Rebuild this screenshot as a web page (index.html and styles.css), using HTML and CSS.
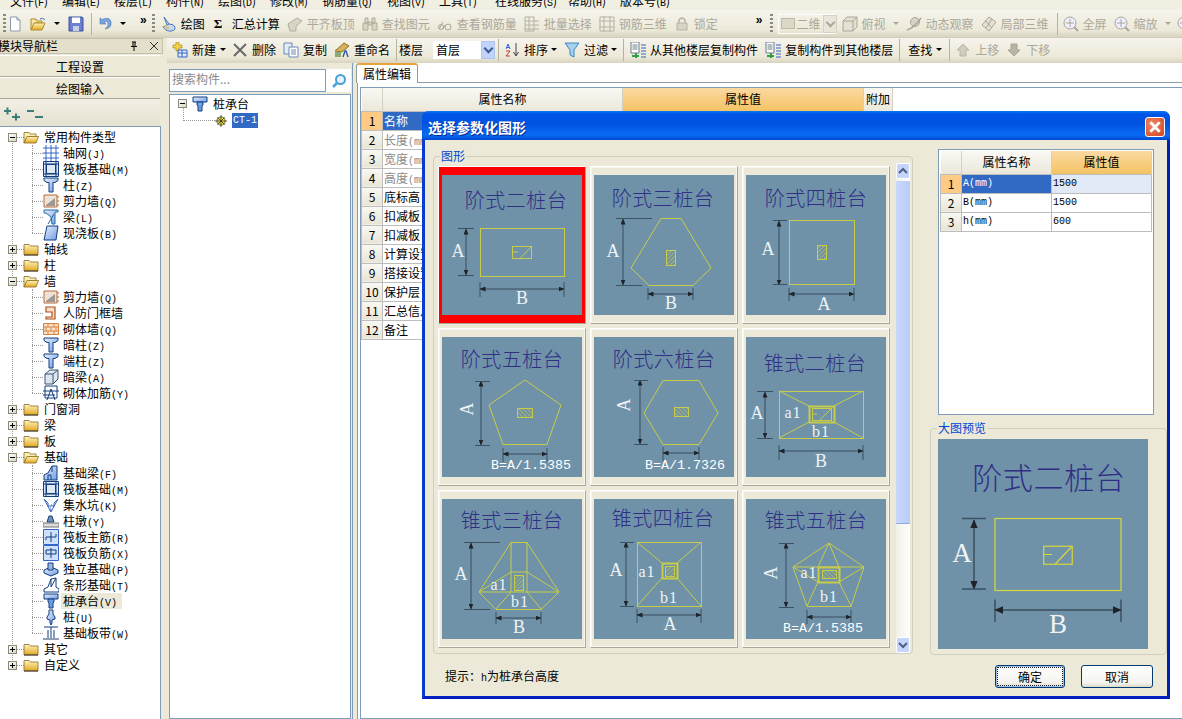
FILE: index.html
```html
<!DOCTYPE html>
<html lang="zh-CN">
<head>
<meta charset="utf-8">
<title>选择参数化图形</title>
<link rel="stylesheet" href="styles.css">
</head>
<body>
<svg class="defs" width="0" height="0" aria-hidden="true">
  <defs>
    <linearGradient id="gf" x1="0" y1="0" x2="0" y2="1"><stop offset="0" stop-color="#fff3b8"/><stop offset="1" stop-color="#e0a820"/></linearGradient>
    <linearGradient id="gb" x1="0" y1="0" x2="1" y2="1"><stop offset="0" stop-color="#e8f0ff"/><stop offset="1" stop-color="#6d9be0"/></linearGradient>
    <marker id="ah" viewBox="0 0 6 5" refX="5.500" refY="2.500" markerWidth="6" markerHeight="5" markerUnits="userSpaceOnUse" orient="auto-start-reverse"><path d="M0 0 6 2.500 0 5z" fill="#1d2328"/></marker>
    <pattern id="ht" width="3" height="3" patternUnits="userSpaceOnUse" patternTransform="rotate(45)"><path d="M0 0V3" stroke="#c8cc48" stroke-width="1.200"/></pattern>
    <pattern id="ht2" width="3" height="3" patternUnits="userSpaceOnUse" patternTransform="rotate(-45)"><path d="M0 0V3" stroke="#c8cc48" stroke-width="1.200"/></pattern>
    <symbol id="fc" viewBox="0 0 16 16"><path d="M1 3.500h5l1.500 1.500H15V14H1z" fill="url(#gf)" stroke="#8a6a1c" stroke-width=".8"/><path d="M1 14H15" stroke="#3a3a3a"/></symbol>
    <symbol id="fo" viewBox="0 0 16 16"><path d="M1 3.500h5l1 1.500h6v3H4L1 14z" fill="#fbeeb6" stroke="#8a6a1c" stroke-width=".8"/><path d="M4 7.500h11.500L13 14H1z" fill="url(#gf)" stroke="#8a6a1c" stroke-width=".8"/></symbol>
    <symbol id="i-grid" viewBox="0 0 16 16"><path d="M3 0V16M8 0V16M13 0V16M0 3H16M0 8H16M0 13H16" stroke="#3465c8" fill="none"/></symbol>
    <symbol id="i-raft" viewBox="0 0 16 16"><path d="M.5.500h15v15H.5z" fill="#dfe9f8" stroke="#123e80"/><path d="M3.500 3.500h9v9h-9zM3 0V16M13 0V16M0 3H16M0 13H16" stroke="#123e80" fill="none"/></symbol>
    <symbol id="i-col" viewBox="0 0 16 16"><path d="M1 1h14v2.500l-3 2H10V15H6V5.500H4l-3-2z" fill="url(#gb)" stroke="#123e80"/></symbol>
    <symbol id="i-wall" viewBox="0 0 16 16"><path d="M1 2h13v12H1z" fill="#efe2d8" stroke="#b96a3a"/><path d="M3 12 12 5v8H3z" fill="#999"/><path d="M15 3v2M15 7v2M15 11v2" stroke="#d65b12"/></symbol>
    <symbol id="i-beam" viewBox="0 0 16 16"><path d="M1 1h14v2H12v12H9L8 8 3 4H1z" fill="url(#gb)" stroke="#1e6ea8"/><path d="M5 15 11 5" stroke="#1e6ea8"/></symbol>
    <symbol id="i-slab" viewBox="0 0 16 16"><path d="M4 1h11l-2 14H1z" fill="url(#gb)" stroke="#123e80"/></symbol>
    <symbol id="i-door" viewBox="0 0 16 16"><path d="M3 2h9v12H3v-2h6V7H3z" fill="#f6dcc8" stroke="#b0501c" stroke-width="1.200"/></symbol>
    <symbol id="i-brick" viewBox="0 0 16 16"><path d="M.5 2.500h15v11H.5z" fill="#fbe2c8" stroke="#d9813c"/><path d="M0 6H16M0 10H16M5 2.500V6M11 2.500V6M3 6v4M8 6v4M13 6v4M5 10v4M11 10v4" stroke="#d9813c"/></symbol>
    <symbol id="i-dbeam" viewBox="0 0 16 16"><path d="M2 5 7 1h8v9l-5 5H2z" fill="#dce6f2" stroke="#40546c"/><path d="M2 5h8v10M10 5l5-4" stroke="#40546c" fill="none"/></symbol>
    <symbol id="i-rebar" viewBox="0 0 16 16"><path d="M2 1h12v12H2z" fill="#fff" stroke="#123e80"/><path d="M0 6H16M0 10H12M8 4 4 15M8 4l4 11" stroke="#123e80" fill="none"/></symbol>
    <symbol id="i-fbeam" viewBox="0 0 16 16"><path d="M1 15v-5l4-2 4-7h5v14z" fill="url(#gb)" stroke="#123e80"/><path d="M5 15V10h3v5M9 1v6" stroke="#123e80" fill="none"/></symbol>
    <symbol id="i-pit" viewBox="0 0 16 16"><path d="M1 2 5 6v3h6V6l4-4M1 2l7 13 7-13" stroke="#3465c8" fill="#fff"/><path d="M4 9h1M7 11h1M10 9h1M8 8h1M6 13h3" stroke="#3465c8"/></symbol>
    <symbol id="i-pier" viewBox="0 0 16 16"><path d="M6 3h3l2 6H4z" fill="#6d8fc0" stroke="#24406c"/><path d="M0 10h16v4H0z" fill="#ddd" stroke="#777"/></symbol>
    <symbol id="i-rm" viewBox="0 0 16 16"><path d="M.5.500h15v15H.5z" fill="#cfe0fa" stroke="#3465c8"/><path d="M8 3v10M3 8h10M3 8v3M13 8v-3" stroke="#123e80" fill="none"/></symbol>
    <symbol id="i-rn" viewBox="0 0 16 16"><path d="M.5.500h15v15H.5z" fill="#cfe0fa" stroke="#3465c8"/><path d="M3 5h10M3 9h10M8 3v10M3 5v4M13 5v4" stroke="#123e80" fill="none"/></symbol>
    <symbol id="i-iso" viewBox="0 0 16 16"><path d="M1 9 8 6l7 3v3l-7 3-7-3z" fill="url(#gb)" stroke="#123e80"/><path d="M5 2h5v7H5z" fill="#9db7dc" stroke="#123e80"/></symbol>
    <symbol id="i-strip" viewBox="0 0 16 16"><path d="M1 15v-3l4-2 3-8 5-1v9l3 2v3z" fill="#fff" stroke="#123e80"/><path d="M8 2v8M13 1 8 10" stroke="#123e80" fill="none"/></symbol>
    <symbol id="i-cap" viewBox="0 0 16 16"><path d="M1 1h14v5H1z" fill="url(#gb)" stroke="#123e80"/><path d="M5 6h6v3l-1 1v5H6v-5L5 9z" fill="#6d9be0" stroke="#123e80"/></symbol>
    <symbol id="i-pile" viewBox="0 0 16 16"><path d="M6 1h4v4l2 3v2l-3 1v3l-1 2-1-2v-3l-3-1V8l2-3z" fill="url(#gb)" stroke="#123e80"/></symbol>
    <symbol id="i-band" viewBox="0 0 16 16"><path d="M1 2H15M8 2v11M5 5v8M11 5v8" stroke="#123e80" fill="none"/><path d="M0 13h16v2H0z" fill="#8c9db4"/></symbol>
    <symbol id="i-ct" viewBox="0 0 16 16"><circle cx="8" cy="8" r="5.500" fill="#efe02e" stroke="#333"/><path d="M8 0v16M0 8h16M3 3l10 10M13 3 3 13" stroke="#333"/></symbol>
    <symbol id="t-new" viewBox="0 0 16 16"><path d="M3.500 1H10l3 3v11H3.500z" fill="#fff" stroke="#8b99aa"/><path d="M10 1v3h3" fill="#dde" stroke="#8b99aa"/></symbol>
    <symbol id="t-open" viewBox="0 0 16 16"><path d="M1 3h5l1 2h5v2H5L1 14z" fill="#f7e6a8" stroke="#b08a30"/><path d="M4 7h11l-3 7H1z" fill="url(#gf)" stroke="#b08a30"/><path d="M10 3q3-2 5 1" stroke="#3a72c8" fill="none"/></symbol>
    <symbol id="t-save" viewBox="0 0 16 16"><path d="M1 1h13l1 1v13H1z" fill="#6a7fd0" stroke="#3c4f9c"/><path d="M4 1.500h8V7H4z" fill="#fff"/><path d="M5 10h6v5H5z" fill="#c8d0e8"/></symbol>
    <symbol id="t-undo" viewBox="0 0 16 16"><path d="M3 2v6h6L7 6q3-2 4 1t-3 6q7-1 6-7T5 3.500z" fill="#7aa4dc" stroke="#4a78b8" stroke-width=".6"/></symbol>
    <symbol id="t-draw" viewBox="0 0 16 16"><path d="M3 1 8 8l-2 1zM8 8q5 0 6 3t-3 4q-7 1-9-5" fill="#c8d8f4" stroke="#4a78b8"/><path d="M3 10h3M5 12h3" stroke="#d9a520"/></symbol>
    <symbol id="t-dis1" viewBox="0 0 16 16"><path d="M1 8 10 2l5 3-6 5v5H3z" fill="#d8d5c5" stroke="#b0ad9c"/></symbol>
    <symbol id="t-dis2" viewBox="0 0 16 16"><path d="M1 7h5v7H1zM10 7h5v7h-5zM3 2h3v5H3zM10 2h3v5h-3zM6 6h4v3H6z" fill="#d8d5c5" stroke="#b0ad9c"/></symbol>
    <symbol id="t-dis3" viewBox="0 0 16 16"><path d="M2 13 6 6M6 13 8 9" stroke="#aaa79a" fill="none"/><circle cx="4" cy="11" r="2.500" fill="none" stroke="#aaa79a"/><circle cx="11" cy="11" r="3" fill="none" stroke="#aaa79a"/></symbol>
    <symbol id="t-dis4" viewBox="0 0 16 16"><path d="M1 1h9v14H1zM1 5h14M1 9h14M1 13h14M5 1v14" fill="none" stroke="#b5b2a3"/></symbol>
    <symbol id="t-dis5" viewBox="0 0 16 16"><path d="M1 1h14v14H1zM5 0v16M11 0v16M0 5h16M0 11h16" fill="none" stroke="#b5b2a3"/></symbol>
    <symbol id="t-dis6" viewBox="0 0 16 16"><path d="M5 7V4q3-4 6 0v3" fill="none" stroke="#b5b2a3" stroke-width="1.500"/><path d="M3 7h10v7H3z" fill="#d8d5c5" stroke="#b5b2a3"/></symbol>
    <symbol id="t-dis7" viewBox="0 0 16 16"><path d="M1 5 5 1h10v10l-4 4H1zM1 5h10v10M11 5l4-4" fill="#e4e1d2" stroke="#aaa79a"/></symbol>
    <symbol id="t-dis8" viewBox="0 0 16 16"><circle cx="9" cy="6" r="4.500" fill="#d8d5c5" stroke="#aaa79a"/><path d="M1 14Q8 12 15 2" stroke="#aaa79a" fill="none" stroke-width="1.500"/></symbol>
    <symbol id="t-dis9" viewBox="0 0 16 16"><path d="M8 1 15 6 8 15 1 9zM4 4l7 8M11 3 5 12" fill="#e4e1d2" stroke="#aaa79a"/></symbol>
    <symbol id="t-zoomd" viewBox="0 0 16 16"><circle cx="7" cy="7" r="6" fill="#eef" stroke="#aaa79a"/><path d="M11 11l4 4" stroke="#aaa79a" stroke-width="2"/><path d="M7 3v8M3 7h8" stroke="#aaa79a"/></symbol>
    <symbol id="t-add" viewBox="0 0 16 16"><path d="M1 3h3V0h3v3h3v3H7v3H4V6H1z" fill="#f4d24c" stroke="#a98a1c" stroke-width=".7"/><path d="M6 8h9v7H6z" fill="#dfe9f8" stroke="#3465c8"/><path d="M6 11h9M10 8v7" stroke="#3465c8"/></symbol>
    <symbol id="t-del" viewBox="0 0 16 16"><path d="M2 2 14 14M14 2 2 14" stroke="#6a6a6a" stroke-width="2"/></symbol>
    <symbol id="t-copy" viewBox="0 0 16 16"><path d="M1 1h8v11H1z" fill="#e4ecfa" stroke="#6a88b4"/><path d="M6 5h9v10H6z" fill="#fff" stroke="#6a88b4"/><path d="M8 8h5M8 10h5M8 12h5" stroke="#6a88b4"/></symbol>
    <symbol id="t-ren" viewBox="0 0 16 16"><path d="M1 9 10 1l5 3-7 6z" fill="#d6b15a" stroke="#8f7327"/><path d="M1 10h6v5H1z" fill="#8aa878"/><path d="M9 15l2-6h1l2 6" fill="none" stroke="#2d5dac" stroke-width="1.400"/></symbol>
    <symbol id="t-sort" viewBox="0 0 16 16"><path d="M12 1v12M9.500 10l2.500 4 2.500-4" stroke="#444" fill="none"/><path d="M2 7l2-5 2 5M3 5.500h2" stroke="#3465c8" fill="none"/><path d="M2 9h4l-4 5h4" stroke="#c03a3a" fill="none"/></symbol>
    <symbol id="t-filter" viewBox="0 0 16 16"><path d="M1 1h14L10 8v7l-4-2V8z" fill="#a6d0ee" stroke="#3c88c0"/></symbol>
    <symbol id="t-cp1" viewBox="0 0 16 16"><path d="M1 0h8v11H1z" fill="#fff" stroke="#6b7b8c"/><path d="M2.500 3h5M2.500 5h5M2.500 7h5" stroke="#6b7b8c"/><path d="M11 3h5M11 6h5M11 9h5M11 12h5M11 15h5" stroke="#3465c8"/><path d="M2 13h3v-2h2v2h2v2H7v1H5v-1H2z" fill="#2f9e44"/></symbol>
    <symbol id="t-up" viewBox="0 0 16 16"><path d="M8 2l6 6h-3v6H5V8H2z" fill="#d0cdbd" stroke="#b8b5a5"/></symbol>
    <symbol id="t-down" viewBox="0 0 16 16"><path d="M8 14 2 8h3V2h6v6h3z" fill="#b8b5a5" stroke="#a8a595"/></symbol>
    <symbol id="t-mag" viewBox="0 0 16 16"><circle cx="9.500" cy="6.500" r="4.500" fill="#e6f3fc" stroke="#4aa0d8" stroke-width="2"/><path d="M6 10l-4 4" stroke="#4aa0d8" stroke-width="2.500"/></symbol>
  </defs>
</svg>

<div class="menubar"><div class="menu-inner">
  <span class="mi">文件(<span class="lat">F</span>)</span><span class="mi">编辑(<span class="lat">E</span>)</span><span class="mi">楼层(<span class="lat">L</span>)</span><span class="mi">构件(<span class="lat">N</span>)</span><span class="mi">绘图(<span class="lat">D</span>)</span><span class="mi">修改(<span class="lat">M</span>)</span><span class="mi mw">钢筋量(<span class="lat">Q</span>)</span><span class="mi">视图(<span class="lat">V</span>)</span><span class="mi mt">工具(<span class="lat">T</span>)</span><span class="mi mx">在线服务(<span class="lat">S</span>)</span><span class="mi">帮助(<span class="lat">H</span>)</span><span class="mi">版本号(<span class="lat">B</span>)</span>
</div></div>

<div class="toolbar tb1">
  <i class="grip"></i>
  <svg class="ic m1l"><use href="#t-new"/></svg>
  <svg class="ic"><use href="#t-open"/></svg>
  <i class="arr m8l"></i>
  <svg class="ic m8l"><use href="#t-save"/></svg>
  <i class="sep"></i>
  <svg class="ic m5l"><use href="#t-undo"/></svg>
  <i class="arr"></i>
  <b class="chev">»</b>
  <i class="grip m5l"></i>
  <span class="ti m6l"><svg class="ic"><use href="#t-draw"/></svg>绘图</span>
  <span class="ti m9l"><b class="sigma">Σ</b>汇总计算</span>
  <span class="ti dis"><svg class="ic"><use href="#t-dis1"/></svg>平齐板顶</span>
  <span class="ti dis"><svg class="ic"><use href="#t-dis2"/></svg>查找图元</span>
  <span class="ti dis"><svg class="ic"><use href="#t-dis3"/></svg>查看钢筋量</span>
  <span class="ti dis"><svg class="ic"><use href="#t-dis4"/></svg>批量选择</span>
  <span class="ti dis"><svg class="ic"><use href="#t-dis5"/></svg>钢筋三维</span>
  <span class="ti dis"><svg class="ic"><use href="#t-dis6"/></svg>锁定</span>
  <b class="chev far">»</b>
  <i class="grip"></i>
  <span class="combo-dis"><i class="swatch"></i>二维<i class="dd"></i></span>
  <span class="ti dis m6l"><svg class="ic"><use href="#t-dis7"/></svg>俯视</span>
  <i class="arr dis-arr"></i>
  <span class="ti dis"><svg class="ic"><use href="#t-dis8"/></svg>动态观察</span>
  <span class="ti dis"><svg class="ic"><use href="#t-dis9"/></svg>局部三维</span>
  <i class="sep m8l"></i>
  <span class="ti dis m5l"><svg class="ic"><use href="#t-zoomd"/></svg>全屏</span>
  <span class="ti dis"><svg class="ic"><use href="#t-zoomd"/></svg>缩放</span>
  <i class="arr dis-arr"></i>
  <svg class="ic m6l"><use href="#t-zoomd"/></svg>
</div>

<div class="work">
  <aside class="nav">
    <div class="nav-head"><span>模块导航栏</span><span class="nav-btns">
      <svg class="hbtn" viewBox="0 0 10 10"><path d="M3 1h4M4 1v4M6 1v4M2 5.500h6M5 5.500V10" stroke="#000" fill="none"/></svg>
      <svg class="hbtn" viewBox="0 0 10 10"><path d="M1 1 9 9M9 1 1 9" stroke="#333" fill="none"/></svg>
    </span></div>
    <div class="nav-btn">工程设置</div>
    <div class="nav-btn">绘图输入</div>
    <div class="nav-tools">
      <svg class="pm" viewBox="0 0 16 14"><path d="M0 4h7M3.500 .5v7M8 10h8M12 6.500v7" stroke="#3d7d78" stroke-width="2" fill="none"/></svg>
      <svg class="pm" viewBox="0 0 16 14"><path d="M0 4h7M8 10h8" stroke="#3d7d78" stroke-width="2" fill="none"/></svg>
    </div>
    <div class="tree">
      <div class="row top"><i class="exp open"></i><svg class="ic fd"><use href="#fo"/></svg><span class="lb">常用构件类型</span></div>
      <div class="kids">
        <div class="row leaf"><svg class="ic"><use href="#i-grid"/></svg><span class="lb">轴网<span class="lat">(J)</span></span></div>
        <div class="row leaf"><svg class="ic"><use href="#i-raft"/></svg><span class="lb">筏板基础<span class="lat">(M)</span></span></div>
        <div class="row leaf"><svg class="ic"><use href="#i-col"/></svg><span class="lb">柱<span class="lat">(Z)</span></span></div>
        <div class="row leaf"><svg class="ic"><use href="#i-wall"/></svg><span class="lb">剪力墙<span class="lat">(Q)</span></span></div>
        <div class="row leaf"><svg class="ic"><use href="#i-beam"/></svg><span class="lb">梁<span class="lat">(L)</span></span></div>
        <div class="row leaf"><svg class="ic"><use href="#i-slab"/></svg><span class="lb">现浇板<span class="lat">(B)</span></span></div>
      </div>
      <div class="row top"><i class="exp"></i><svg class="ic fd"><use href="#fc"/></svg><span class="lb">轴线</span></div>
      <div class="row top"><i class="exp"></i><svg class="ic fd"><use href="#fc"/></svg><span class="lb">柱</span></div>
      <div class="row top"><i class="exp open"></i><svg class="ic fd"><use href="#fo"/></svg><span class="lb">墙</span></div>
      <div class="kids">
        <div class="row leaf"><svg class="ic"><use href="#i-wall"/></svg><span class="lb">剪力墙<span class="lat">(Q)</span></span></div>
        <div class="row leaf"><svg class="ic"><use href="#i-door"/></svg><span class="lb">人防门框墙</span></div>
        <div class="row leaf"><svg class="ic"><use href="#i-brick"/></svg><span class="lb">砌体墙<span class="lat">(Q)</span></span></div>
        <div class="row leaf"><svg class="ic"><use href="#i-col"/></svg><span class="lb">暗柱<span class="lat">(Z)</span></span></div>
        <div class="row leaf"><svg class="ic"><use href="#i-col"/></svg><span class="lb">端柱<span class="lat">(Z)</span></span></div>
        <div class="row leaf"><svg class="ic"><use href="#i-dbeam"/></svg><span class="lb">暗梁<span class="lat">(A)</span></span></div>
        <div class="row leaf"><svg class="ic"><use href="#i-rebar"/></svg><span class="lb">砌体加筋<span class="lat">(Y)</span></span></div>
      </div>
      <div class="row top"><i class="exp"></i><svg class="ic fd"><use href="#fc"/></svg><span class="lb">门窗洞</span></div>
      <div class="row top"><i class="exp"></i><svg class="ic fd"><use href="#fc"/></svg><span class="lb">梁</span></div>
      <div class="row top"><i class="exp"></i><svg class="ic fd"><use href="#fc"/></svg><span class="lb">板</span></div>
      <div class="row top"><i class="exp open"></i><svg class="ic fd"><use href="#fo"/></svg><span class="lb">基础</span></div>
      <div class="kids">
        <div class="row leaf"><svg class="ic"><use href="#i-fbeam"/></svg><span class="lb">基础梁<span class="lat">(F)</span></span></div>
        <div class="row leaf"><svg class="ic"><use href="#i-raft"/></svg><span class="lb">筏板基础<span class="lat">(M)</span></span></div>
        <div class="row leaf"><svg class="ic"><use href="#i-pit"/></svg><span class="lb">集水坑<span class="lat">(K)</span></span></div>
        <div class="row leaf"><svg class="ic"><use href="#i-pier"/></svg><span class="lb">柱墩<span class="lat">(Y)</span></span></div>
        <div class="row leaf"><svg class="ic"><use href="#i-rm"/></svg><span class="lb">筏板主筋<span class="lat">(R)</span></span></div>
        <div class="row leaf"><svg class="ic"><use href="#i-rn"/></svg><span class="lb">筏板负筋<span class="lat">(X)</span></span></div>
        <div class="row leaf"><svg class="ic"><use href="#i-iso"/></svg><span class="lb">独立基础<span class="lat">(P)</span></span></div>
        <div class="row leaf"><svg class="ic"><use href="#i-strip"/></svg><span class="lb">条形基础<span class="lat">(T)</span></span></div>
        <div class="row leaf cur"><svg class="ic"><use href="#i-cap"/></svg><span class="lb">桩承台<span class="lat">(V)</span></span></div>
        <div class="row leaf"><svg class="ic"><use href="#i-pile"/></svg><span class="lb">桩<span class="lat">(U)</span></span></div>
        <div class="row leaf"><svg class="ic"><use href="#i-band"/></svg><span class="lb">基础板带<span class="lat">(W)</span></span></div>
      </div>
      <div class="row top"><i class="exp"></i><svg class="ic fd"><use href="#fc"/></svg><span class="lb">其它</span></div>
      <div class="row top"><i class="exp"></i><svg class="ic fd"><use href="#fc"/></svg><span class="lb">自定义</span></div>
    </div>
  </aside>

  <div class="rightcol">
    <div class="toolbar tb2">
      <span class="ti m5l"><svg class="ic"><use href="#t-add"/></svg>新建</span>
      <i class="arr m4l"></i>
      <span class="ti m6l"><svg class="ic"><use href="#t-del"/></svg>删除</span>
      <span class="ti"><svg class="ic"><use href="#t-copy"/></svg>复制</span>
      <span class="ti"><svg class="ic"><use href="#t-ren"/></svg>重命名</span>
      <i class="sep m6l"></i>
      <span class="ti m2l">楼层</span>
      <span class="combo">首层<i class="dd blue"></i></span>
      <i class="sep m3l"></i>
      <span class="ti m5l"><svg class="ic"><use href="#t-sort"/></svg>排序</span>
      <i class="arr m3l"></i>
      <span class="ti"><svg class="ic"><use href="#t-filter"/></svg>过滤</span>
      <i class="arr m3l"></i>
      <i class="sep m6l"></i>
      <span class="ti m6l"><svg class="ic"><use href="#t-cp1"/></svg>从其他楼层复制构件</span>
      <span class="ti"><svg class="ic"><use href="#t-cp1"/></svg>复制构件到其他楼层</span>
      <i class="sep m6l"></i>
      <span class="ti m8l">查找</span>
      <i class="arr m4l"></i>
      <i class="sep"></i>
      <span class="ti dis m5l"><svg class="ic"><use href="#t-up"/></svg>上移</span>
      <span class="ti dis"><svg class="ic"><use href="#t-down"/></svg>下移</span>
    </div>
    <div class="panes">
      <section class="comp">
        <div class="search"><span class="search-in">搜索构件...</span><span class="search-btn"><svg class="ic"><use href="#t-mag"/></svg></span></div>
        <div class="ctree">
          <div class="crow"><i class="exp open"></i><svg class="ic cic"><use href="#i-cap"/></svg><span class="clb">桩承台</span></div>
          <div class="crow child"><svg class="cgear"><use href="#i-ct"/></svg><span class="csel">CT-1</span></div>
        </div>
      </section>
      <section class="editor">
        <div class="tabs"><span class="tab">属性编辑</span></div>
        <div class="pane">
          <div class="gridwrap">
            <table class="ptable">
              <thead><tr><th class="c0"></th><th class="c1">属性名称</th><th class="c2 hot">属性值</th><th class="c3">附加</th></tr></thead>
              <tbody>
                <tr><th class="rn hot2">1</th><td class="sel">名称</td><td></td><td></td></tr>
                <tr class="gray"><th class="rn">2</th><td>长度<span class="lat">(mm)</span></td><td></td><td></td></tr>
                <tr class="gray"><th class="rn">3</th><td>宽度<span class="lat">(mm)</span></td><td></td><td></td></tr>
                <tr class="gray"><th class="rn">4</th><td>高度<span class="lat">(mm)</span></td><td></td><td></td></tr>
                <tr><th class="rn">5</th><td>底标高</td><td></td><td></td></tr>
                <tr><th class="rn">6</th><td>扣减板</td><td></td><td></td></tr>
                <tr><th class="rn">7</th><td>扣减板</td><td></td><td></td></tr>
                <tr><th class="rn">8</th><td>计算设置</td><td></td><td></td></tr>
                <tr><th class="rn">9</th><td>搭接设置</td><td></td><td></td></tr>
                <tr><th class="rn">10</th><td>保护层</td><td></td><td></td></tr>
                <tr><th class="rn">11</th><td>汇总信息</td><td></td><td></td></tr>
                <tr><th class="rn">12</th><td>备注</td><td></td><td></td></tr>
              </tbody>
            </table>
          </div>
        </div>
      </section>
    </div>
  </div>
</div>

<div class="dialog">
  <div class="dtitle"><span>选择参数化图形</span><span class="dclose"><svg viewBox="0 0 12 12"><path d="M2 2 10 10M10 2 2 10" stroke="#fff" stroke-width="2.400"/></svg></span></div>
  <div class="dmain">
    <div class="gbox shapes">
      <span class="glabel">图形</span>
      <div class="shape-grid">
        <div class="cell active"><svg class="thumb" viewBox="0 0 140 140">
          <text class="tt" x="74" y="33">阶式二桩台</text>
          <rect class="yl" x="38.500" y="53.500" width="84" height="48"/><rect class="yl" x="70.500" y="71.500" width="19" height="12"/><path class="yl" d="M70 77H76M78 83.500 89 72"/>
          <path class="dim" d="M24 54V100" marker-start="url(#ah)" marker-end="url(#ah)"/><path class="tick" d="M16 53.500H32M16 100.500H32M38 107V122M122 107V122"/><path class="dim" d="M38 114H122" marker-start="url(#ah)" marker-end="url(#ah)"/>
          <text class="lab" x="16" y="82">A</text><text class="lab" x="80" y="129">B</text></svg></div>
        <div class="cell"><svg class="thumb" viewBox="0 0 140 140">
          <text class="tt" x="69" y="31">阶式三桩台</text>
          <path class="yl" d="M67 43.500H87L117 93 99 110.500H55L37 93Z"/><rect class="hat" x="72.500" y="75.500" width="9" height="15"/>
          <path class="dim" d="M29 44V110" marker-start="url(#ah)" marker-end="url(#ah)"/><path class="tick" d="M22 43.500H58M22 110.500H48M54 113V125M99 113V125"/><path class="dim" d="M54 119H99" marker-start="url(#ah)" marker-end="url(#ah)"/>
          <text class="lab" x="19" y="82">A</text><text class="lab" x="77" y="134">B</text></svg></div>
        <div class="cell"><svg class="thumb" viewBox="0 0 140 140">
          <text class="tt" x="70" y="31">阶式四桩台</text>
          <rect class="yl" x="43.500" y="45.500" width="65" height="64"/><rect class="hat" x="71.500" y="70.500" width="9" height="14"/>
          <path class="dim" d="M33 46V110" marker-start="url(#ah)" marker-end="url(#ah)"/><path class="tick" d="M27 45.500H41M27 109.500H41M43 113V126M108 113V126"/><path class="dim" d="M43 119H108" marker-start="url(#ah)" marker-end="url(#ah)"/>
          <text class="lab" x="22" y="80">A</text><text class="lab" x="78" y="135">A</text></svg></div>
        <div class="cell"><svg class="thumb" viewBox="0 0 140 140">
          <text class="tt" x="70" y="30">阶式五桩台</text>
          <path class="yl" d="M83 43 119 68 105 107.500H61L47 68Z"/><rect class="hat2" x="75.500" y="71.500" width="15" height="9"/>
          <path class="dim" d="M39 44V108" marker-start="url(#ah)" marker-end="url(#ah)"/><path class="tick" d="M33 44.500H48M33 108.500H48M61 111V125M105 111V125"/><path class="dim" d="M61 117H105" marker-start="url(#ah)" marker-end="url(#ah)"/>
          <text class="lab rot" transform="translate(31 72) rotate(-90)">A</text><text class="fml" x="49" y="132">B=A/1.5385</text></svg></div>
        <div class="cell"><svg class="thumb" viewBox="0 0 140 140">
          <text class="tt" x="70" y="30">阶式六桩台</text>
          <path class="yl" d="M69 43.500H105L124 76 105 107.500H69L50 76Z"/><rect class="hat2" x="80.500" y="70.500" width="14" height="9"/>
          <path class="dim" d="M46 43V107" marker-start="url(#ah)" marker-end="url(#ah)"/><path class="tick" d="M40 43.500H54M40 107.500H54M69 110V124M105 110V124"/><path class="dim" d="M69 116H105" marker-start="url(#ah)" marker-end="url(#ah)"/>
          <text class="lab rot" transform="translate(36 68) rotate(-90)">A</text><text class="fml" x="51" y="132">B=A/1.7326</text></svg></div>
        <div class="cell"><svg class="thumb" viewBox="0 0 140 140">
          <text class="tt" x="69" y="34">锥式二桩台</text>
          <rect class="yl" x="33.500" y="54.500" width="84" height="47"/><rect class="yl wide" x="63.500" y="69.500" width="25" height="16"/><rect class="yl" x="66.500" y="71.500" width="19" height="12"/><path class="yl" d="M33 54 63 69M117 54 88 69M33 101 63 85M117 101 88 85M66 77H71M73 83.500 85 72"/>
          <path class="dim" d="M19 55V101" marker-start="url(#ah)" marker-end="url(#ah)"/><path class="tick" d="M11 54.500H27M11 101.500H27M33 108V123M117 108V123"/><path class="dim" d="M33 114H117" marker-start="url(#ah)" marker-end="url(#ah)"/>
          <text class="lab" x="11" y="82">A</text><text class="lab2" x="47" y="81">a1</text><text class="lab2" x="75" y="100">b1</text><text class="lab" x="75" y="130">B</text></svg></div>
        <div class="cell"><svg class="thumb" viewBox="0 0 140 140">
          <text class="tt" x="70" y="29">锥式三桩台</text>
          <path class="yl" d="M69 43.500H85L117 93 99 110.500H54L37 93ZM37 93H117M69 43V93M85 43V93M69 73H85M37 93 69 73M117 93 85 73M69 93 54 110M85 93 99 110"/><rect class="hat" x="72.500" y="76.500" width="9" height="15"/>
          <path class="dim" d="M29 44V110" marker-start="url(#ah)" marker-end="url(#ah)"/><path class="tick" d="M22 43.500H58M22 110.500H48M54 113V125M99 113V125"/><path class="dim" d="M54 119H99" marker-start="url(#ah)" marker-end="url(#ah)"/>
          <text class="lab" x="19" y="81">A</text><text class="lab2" x="57" y="91">a1</text><text class="lab2" x="78" y="108">b1</text><text class="lab" x="77" y="134">B</text></svg></div>
        <div class="cell"><svg class="thumb" viewBox="0 0 140 140">
          <text class="tt" x="69" y="27">锥式四桩台</text>
          <rect class="yl" x="43.500" y="43.500" width="64" height="64"/><rect class="yl wide" x="68.500" y="64.500" width="15" height="15"/><rect class="hat" x="71.500" y="67.500" width="9" height="10"/><path class="yl" d="M43 43 68 64M107 43 83 64M43 107 68 79M107 107 83 79"/>
          <path class="dim" d="M32 43V107" marker-start="url(#ah)" marker-end="url(#ah)"/><path class="tick" d="M26 43.500H40M26 107.500H40M43 110V124M107 110V124"/><path class="dim" d="M43 116H107" marker-start="url(#ah)" marker-end="url(#ah)"/>
          <text class="lab" x="22" y="77">A</text><text class="lab2" x="53" y="78">a1</text><text class="lab2" x="75" y="104">b1</text><text class="lab" x="76" y="131">A</text></svg></div>
        <div class="cell"><svg class="thumb" viewBox="0 0 140 140">
          <text class="tt" x="70" y="29">锥式五桩台</text>
          <path class="yl" d="M83 44 118 68 105 107.500H61L47 68ZM47 68H118M83 44 72 68M83 44 93 68M72 83 61 107M93 83 105 107M47 68 72 83M118 68 93 83"/><rect class="yl wide" x="72.500" y="68.500" width="21" height="15"/><rect class="hat2" x="76.500" y="71.500" width="14" height="8"/>
          <path class="dim" d="M40 44V108" marker-start="url(#ah)" marker-end="url(#ah)"/><path class="tick" d="M33 44.500H48M33 108.500H48M61 111V125M105 111V125"/><path class="dim" d="M61 118H105" marker-start="url(#ah)" marker-end="url(#ah)"/>
          <text class="lab rot" transform="translate(31 74) rotate(-90)">A</text><text class="lab2" x="63" y="79">a1</text><text class="lab2" x="83" y="103">b1</text><text class="fml" x="37" y="133">B=A/1.5385</text></svg></div>
      </div>
      <div class="vscroll"><span class="sb-btn"><svg viewBox="0 0 10 10"><path d="M1 7 5 3 9 7" stroke="#4d6185" stroke-width="2" fill="none"/></svg></span><span class="sb-thumb"></span><span class="sb-btn sb-end"><svg viewBox="0 0 10 10"><path d="M1 3 5 7 9 3" stroke="#4d6185" stroke-width="2" fill="none"/></svg></span></div>
    </div>
    <div class="dright">
      <div class="paramwrap">
        <table class="param">
          <thead><tr><th class="p0"></th><th class="p1">属性名称</th><th class="p2 hot">属性值</th></tr></thead>
          <tbody>
            <tr><th class="rn hot2">1</th><td class="sel">A(mm)</td><td class="selv">1500</td></tr>
            <tr><th class="rn">2</th><td>B(mm)</td><td>1500</td></tr>
            <tr><th class="rn">3</th><td>h(mm)</td><td>600</td></tr>
          </tbody>
        </table>
      </div>
      <div class="gbox preview">
        <span class="glabel">大图预览</span>
        <svg class="big" viewBox="0 0 140 140">
          <text class="tt" x="74" y="33">阶式二桩台</text>
          <rect class="yl thin" x="38" y="53" width="84" height="48"/><rect class="yl thin" x="70.500" y="71.500" width="19" height="12"/><path class="yl thin" d="M70 77H76M78 83.500 89 72"/>
          <path class="dim" d="M24 54V100" marker-start="url(#ah)" marker-end="url(#ah)"/><path class="tick" d="M16 53H32M16 100H32M38 107V122M122 107V122"/><path class="dim" d="M38 114H122" marker-start="url(#ah)" marker-end="url(#ah)"/>
          <text class="lab" x="16" y="82">A</text><text class="lab" x="80" y="129">B</text>
        </svg>
      </div>
    </div>
  </div>
  <div class="dfoot">
    <span class="hint">提示：<span class="lat">h</span>为桩承台高度</span>
    <span class="btns"><span class="btn def">确定</span><span class="btn alt">取消</span></span>
  </div>
</div>
</body>
</html>
```

FILE: styles.css
```css
* { box-sizing: border-box; }
html, body { margin: 0; padding: 0; }
body {
  width: 1182px; height: 719px; overflow: hidden; position: relative;
  background: #ece9d8; color: #000;
  font: 12px/16px "Noto Sans CJK SC", "Liberation Sans", sans-serif;
}
.defs { position: absolute; }
.lat { font-family: "Liberation Mono", monospace; font-size: 10px; line-height: 1; }
i { display: block; font-style: normal; flex: none; }
.ic { width: 16px; height: 16px; display: block; flex: none; }

/* margin helpers */
.m1l { margin-left: 1px; } .m2l { margin-left: 2px !important; } .m3l { margin-left: 3px !important; }
.m4l { margin-left: 4px !important; } .m5l { margin-left: 5px !important; } .m6l { margin-left: 6px !important; }
.m8l { margin-left: 8px !important; } .m9l { margin-left: 9px !important; }

.menubar { height: 10px; overflow: hidden; background: #f1efe2; }
.menu-inner { display: flex; margin-top: -7px; padding-left: 10px; white-space: nowrap; }
.mi { width: 52px; flex: none; }
.mw { width: 65px; }
.mt { width: 56px; }
.mx { width: 73px; }

.toolbar { display: flex; align-items: center; white-space: nowrap; background: linear-gradient(#f6f4ec, #ece9d8 75%, #d8d4c0); }
.tb1 { height: 28px; padding-left: 3px; border-bottom: 1px solid #d0ccb8; }
.tb1 > .ic { margin-left: 7px; }
.tb1 > .ic.m1l { margin-left: 1px; }
.ti { display: flex; align-items: center; gap: 4px; margin-left: 7px; flex: none; }
.dis { color: #aca899; }
.grip { width: 3px; height: 20px; background: repeating-linear-gradient(#8c8a7c 0 2px, transparent 2px 4px); }
.sep { width: 1px; height: 22px; background: #b5b29f; margin-left: 7px; }
.arr { height: 0; border: 3px solid transparent; border-top: 3px solid #000; border-bottom: 0; margin-left: 7px; width: 6px; }
.dis-arr { border-top-color: #aca899; }
.chev { width: 8px; margin-left: 14px; font: bold 12px/12px "Liberation Sans", sans-serif; margin-top: -8px; }
.chev.far { margin-left: 38px; margin-right: 7px; }
.sigma { width: 14px; font: bold 13px/16px "Liberation Serif", serif; }
.combo-dis { display: flex; align-items: center; width: 58px; height: 20px; margin-left: 5px; padding-left: 2px; gap: 2px; color: #aca899; border: 1px solid #fff; flex: none; }
.swatch { width: 14px; height: 11px; background: #dbd8c8; border: 1px solid #bdbaa8; }
.dd { width: 14px; height: 18px; margin-left: auto; background: #e8e6da; border: 1px solid #d4d1c0; position: relative; }
.dd::after { content: ""; position: absolute; left: 3px; top: 3px; width: 5px; height: 5px; border-right: 2px solid #aca899; border-bottom: 2px solid #aca899; transform: rotate(45deg); }
.dd.blue { background: #c1d3fb; border-color: #b0c4ee; height: 18px; }
.dd.blue::after { border-color: #3c5a94; }
.combo { display: flex; align-items: center; width: 62px; height: 18px; margin-left: 10px; padding-left: 3px; background: #fff; flex: none; }

.work { display: flex; height: 681px; }
.nav { width: 163px; flex: none; display: flex; flex-direction: column; }
.nav-head { height: 16px; display: flex; justify-content: space-between; align-items: center; padding: 0 3px 0 0; margin-bottom: 1px; background: #e3dfcb; border: 1px solid #c4c0aa; border-left: 0; overflow: hidden; }
.nav-head > span:first-child { margin-left: -2px; }
.nav-btns { display: flex; gap: 10px; }
.hbtn { width: 10px; height: 10px; display: block; }
.nav-btn { height: 22px; width: 160px; line-height: 21px; text-align: center; background: #ece9d8; border-top: 1px solid #fff; border-bottom: 1px solid #aca899; }
.nav-tools { height: 27px; width: 160px; display: flex; align-items: center; padding: 3px 0 0 4px; gap: 7px; background: linear-gradient(#f2f0e6, #e4e1cf); }
.pm { width: 16px; height: 14px; display: block; }
.tree { position: relative; flex: 1; width: 161px; padding-top: 2px; background: #fff; border: 1px solid #7f9db9; border-left: 0; border-bottom: 0; }
.tree::before { content: ""; position: absolute; left: 12px; top: 9px; height: 528px; border-left: 1px dotted #999; }
.row { position: relative; display: flex; align-items: center; height: 16px; }
.row::before { content: ""; position: absolute; top: 8px; border-top: 1px dotted #999; }
.top { padding-left: 8px; }
.top::before { left: 12px; width: 12px; }
.leaf { padding-left: 43px; }
.leaf::before { left: 32px; width: 11px; }
.exp { position: relative; width: 9px; height: 9px; background: linear-gradient(135deg, #fff, #d8d4c4); border: 1px solid #8a8a7a; z-index: 1; }
.exp::before { content: ""; position: absolute; left: 1px; top: 3px; width: 5px; height: 1px; background: #000; }
.exp::after { content: ""; position: absolute; left: 3px; top: 1px; width: 1px; height: 5px; background: #000; }
.exp.open::after { display: none; }
.fd { margin-left: 6px; position: relative; }
.top .lb { margin-left: 5px; }
.leaf .lb { margin-left: 2px; padding: 0 2px; }
.ic + .lb { position: relative; }
.cur .lb { background: #ece9d8; width: 61px; }
.kids { position: relative; }
.kids::before { content: ""; position: absolute; left: 32px; top: 0; bottom: 8px; border-left: 1px dotted #999; }

.rightcol { flex: 1; display: flex; flex-direction: column; margin-left: 4px; min-width: 0; }
.tb2 { height: 25px; flex: none; padding-bottom: 2px; }
.panes { flex: 1; display: flex; padding-left: 2px; min-height: 0; }
.comp { width: 182px; flex: none; display: flex; flex-direction: column; padding-top: 6px; }
.search { height: 23px; display: flex; flex: none; margin-bottom: 2px; }
.search-in { flex: 1; border: 1px solid #7f9db9; background: #fff; color: #8a8a8a; padding: 1px 2px; line-height: 15px; }
.search-btn { width: 25px; background: #fff; display: flex; align-items: center; justify-content: center; }
.ctree { flex: 1; background: #fff; border: 1px solid #7f9db9; position: relative; }
.crow { display: flex; align-items: center; height: 16px; position: relative; padding-left: 8px; }
.crow:first-child { top: 0; height: 17px; }
.cic { margin-left: 5px; }
.clb { margin-left: 5px; }
.child { padding-left: 45px; height: 15px; margin-top: 1px; }
.child::before { content: ""; position: absolute; left: 13px; top: -9px; width: 31px; height: 16px; border-left: 1px dotted #999; border-bottom: 1px dotted #999; }
.cgear { width: 12px; height: 12px; flex: none; position: relative; }
.csel { margin-left: 5px; padding: 0 1px; background: #316ac5; color: #fff; font: 10px/15px "Liberation Mono", monospace; }
.editor { flex: 1; display: flex; flex-direction: column; margin-left: 1px; padding-left: 3px; min-width: 0; border-left: 1px solid #7f9db9; }
.tabs { height: 20px; flex: none; background: #fff; border-bottom: 1px solid #919b9c; }
.tab { display: block; width: 62px; height: 20px; background: #fff; text-align: center; line-height: 17px; border: 1px solid #919b9c; border-top: 2px solid #e8a33d; border-bottom: 0; border-radius: 3px 3px 0 0; }
.pane { flex: 1; background: #fff; padding: 4px 0 0 2px; border-left: 1px solid #919b9c; margin-left: 1px; }
.gridwrap { height: 100%; border: 1px solid #7f9db9; border-right: 0; background: #fff; }
table { border-collapse: collapse; table-layout: fixed; }
th { font-weight: normal; }
.ptable { width: 531px; }
.ptable .c0 { width: 21px; } .ptable .c1 { width: 240px; } .ptable .c2 { width: 241px; } .ptable .c3 { width: 29px; }
.ptable thead th { height: 23px; background: linear-gradient(#f9f8f3, #ebe8da); border-right: 1px solid #d4d0c0; }
thead th.hot { background: linear-gradient(#fad9a0, #f4c264) !important; }
.ptable tbody th, .ptable tbody td, .param tbody th, .param tbody td { height: 19px; line-height: 15px; border: 1px solid #bdbdbd; padding: 0 1px; white-space: nowrap; overflow: hidden; }
.rn { background: linear-gradient(#f9f8f3, #e8e5d6); text-align: center; }
.rn.hot2 { background: #fdcb85; }
.sel { background: #316ac5; color: #fff; }
.selv { background: #e0e9f5; }
.gray td { color: #8a8a8a; }

.dialog {
  position: absolute; left: 422px; top: 111px; width: 748px; height: 588px;
  display: flex; flex-direction: column;
  background: #ece9d8; border: 3px solid #0a3cd0; border-top: 0; border-right-color: #0020b0; border-bottom-color: #0020c0;
  border-radius: 7px 7px 0 0;
}
.dtitle {
  height: 29px; flex: none; margin: 0 -3px; padding: 2px 5px 0 6px; display: flex; align-items: center; justify-content: space-between;
  color: #fff; font-weight: bold; font-size: 14px; text-shadow: 1px 1px 0 #0a2a90;
  border-radius: 7px 7px 0 0;
  background: linear-gradient(#0a7bf0 0, #0055e8 10%, #0053e0 45%, #0a6cf5 82%, #0049d0 100%);
}
.dclose { width: 20px; height: 20px; display: flex; align-items: center; justify-content: center; border: 1px solid #fff; border-radius: 3px; background: radial-gradient(circle at 35% 35%, #ee8a6a, #d4421c); }
.dclose svg { width: 14px; height: 14px; }
.dmain { flex: 1; display: flex; padding: 9px 0 0 8px; gap: 17px; min-height: 0; }
.gbox { position: relative; border: 1px solid #d0d0bf; border-radius: 4px; }
.glabel { position: absolute; left: 6px; top: -9px; padding: 0 1px; line-height: 16px; color: #0046d5; background: #ece9d8; }
.shapes { width: 480px; height: 498px; margin-top: 7px; padding: 6px 1px 0 4px; display: flex; justify-content: space-between; }
.shape-grid { width: 452px; height: 487px; margin-top: 3px; overflow: hidden; display: grid; grid-template-columns: repeat(3, 148px); grid-auto-rows: 158px; gap: 4px; }
.cell { padding: 8px 3px; background: #ece9d8; border: 1px solid #fff; border-right-color: #aca899; border-bottom-color: #aca899; outline: 1px solid #f6f5ee; outline-offset: -2px; }
.cell.active { background: #f00; outline: 0; }
.thumb { display: block; width: 140px; height: 140px; background: #6f92a9; }
.big { display: block; width: 210px; height: 210px; background: #6f92a9; }
.tt { font: 20px "Noto Sans CJK SC", sans-serif; font-weight: 300; fill: #2f2f85; text-anchor: middle; letter-spacing: .5px; }
.yl { fill: none; stroke: #c8cc48; stroke-width: 1; }
.wide { stroke-width: 2; }
.thin { stroke: #d6d83c; stroke-width: .8; }
.hat { fill: url(#ht); stroke: #c8cc48; }
.hat2 { fill: url(#ht2); stroke: #c8cc48; }
.dim { stroke: #3a4c5c; stroke-width: 1; fill: none; }
.tick { stroke: #3d5260; stroke-width: 1; fill: none; }
.lab { font: 18px "Liberation Serif", serif; fill: #eef3f6; text-anchor: middle; }
.lab2 { font: 16px "Liberation Serif", serif; fill: #eef3f6; text-anchor: middle; letter-spacing: 1px; }
.fml { font: 13.330px "Liberation Mono", monospace; fill: #fff; }
.vscroll { width: 14px; margin-right: 1px; height: 490px; display: flex; flex-direction: column; background: linear-gradient(90deg, #f0efe6, #fff); }
.sb-btn { height: 16px; flex: none; display: flex; align-items: center; justify-content: center; background: #c6d6fb; border: 1px solid #fff; border-radius: 2px; }
.sb-btn svg { width: 10px; height: 10px; }
.sb-thumb { height: 343px; flex: none; margin-top: 2px; background: linear-gradient(90deg, #c9d8fc, #b9cdf8); border-bottom: 1px solid #8fa8e0; border-radius: 1px; }
.sb-end { margin-top: auto; }
.dright { width: 237px; flex: none; }
.paramwrap { width: 216px; height: 266px; margin-left: 8px; padding: 1px; background: #fff; border: 1px solid #7f9db9; }
.param { width: 211px; }
.param .p0 { width: 21px; } .param .p1 { width: 90px; } .param .p2 { width: 100px; }
.param thead th { height: 23px; background: linear-gradient(#f9f8f3, #ebe8da); border-right: 1px solid #d4d0c0; }
.param tbody td { font-family: "Liberation Mono", monospace; font-size: 10px; }
.preview { width: 237px; height: 227px; margin-top: 13px; padding: 10px 0 0 7px; }
.dfoot { height: 41px; flex: none; display: flex; justify-content: space-between; padding: 10px 14px 0 20px; }
.hint { line-height: 22px; }
.btns { display: flex; gap: 16px; }
.btn { height: 23px; line-height: 21px; text-align: center; border: 1px solid #003c74; border-radius: 3px; background: linear-gradient(#fff, #f4f3ee 80%, #dcd8c8); }
.def { width: 70px; box-shadow: inset 0 0 0 1px #9dbce8; outline: 1px dotted #222; outline-offset: -3px; }
.alt { width: 72px; }
```
